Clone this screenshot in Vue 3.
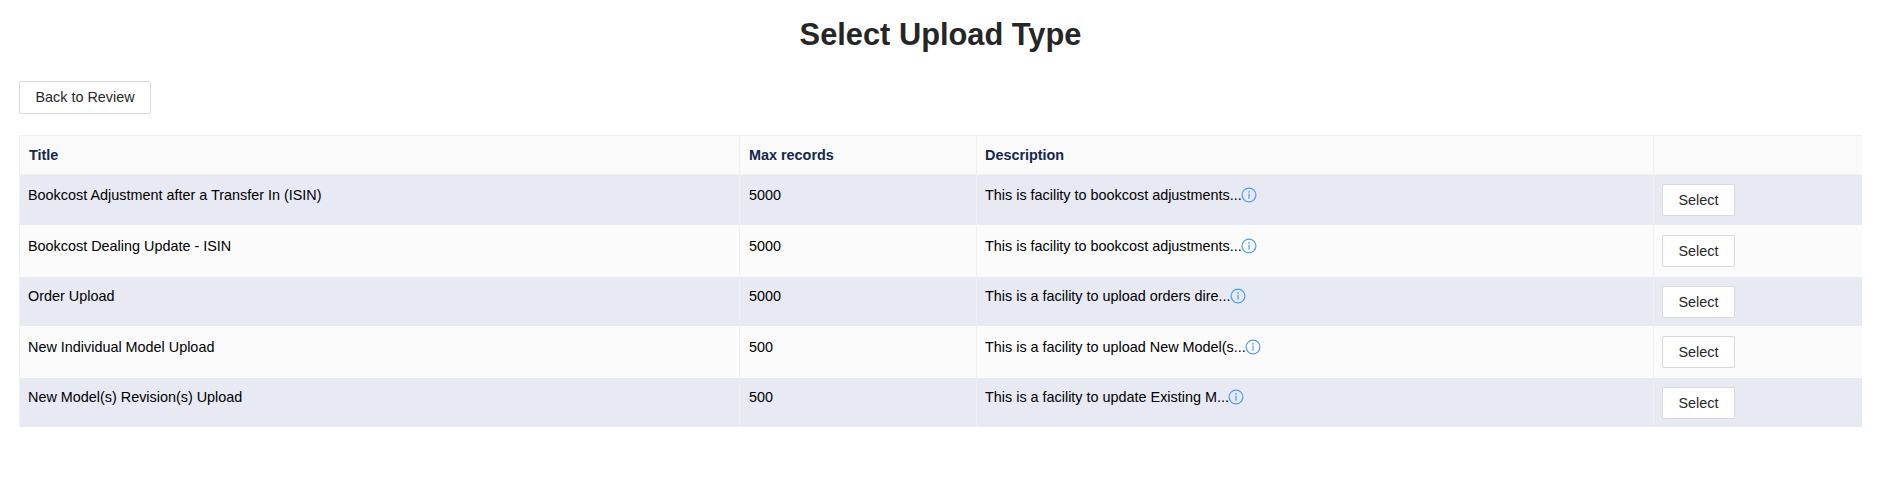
<script setup>
const rows = [
  { title: 'Bookcost Adjustment after a Transfer In (ISIN)', max: 5000, desc: 'This is facility to bookcost adjustments...' },
  { title: 'Bookcost Dealing Update - ISIN', max: 5000, desc: 'This is facility to bookcost adjustments...' },
  { title: 'Order Upload', max: 5000, desc: 'This is a facility to upload orders dire...' },
  { title: 'New Individual Model Upload', max: 500, desc: 'This is a facility to upload New Model(s...' },
  { title: 'New Model(s) Revision(s) Upload', max: 500, desc: 'This is a facility to update Existing M...' },
]
</script>

<template>
  <div class="page">
    <h1 class="heading">Select Upload Type</h1>
    <button class="btn back" type="button">Back to Review</button>
    <table class="grid">
      <colgroup>
        <col class="c1" /><col class="c2" /><col class="c3" /><col class="c4" />
      </colgroup>
      <thead>
        <tr>
          <th>Title</th>
          <th>Max records</th>
          <th>Description</th>
          <th></th>
        </tr>
      </thead>
      <tbody>
        <tr v-for="r in rows" :key="r.title">
          <td>{{ r.title }}</td>
          <td>{{ r.max }}</td>
          <td>
            <span class="desc">{{ r.desc }}<svg class="info" viewBox="0 0 16 16" width="16" height="16" aria-hidden="true">
              <circle cx="8" cy="8" r="6.9" fill="none" stroke="#4f9bf5" stroke-width="1.2" />
              <circle cx="8" cy="4.9" r="0.8" fill="#4f9bf5" />
              <rect x="7.4" y="6.7" width="1.2" height="5" fill="#4f9bf5" />
            </svg></span>
          </td>
          <td class="act"><button class="btn" type="button">Select</button></td>
        </tr>
      </tbody>
    </table>
  </div>
</template>

<style scoped>
.page {
  padding: 0 25px 0 19px;
  font-family: "Liberation Sans", Arial, sans-serif;
  font-size: 14.4px;
  color: #000;
}
.heading {
  margin: 0;
  padding-top: 17px;
  height: 64px;
  font-size: 30.8px;
  line-height: 36px;
  font-weight: 700;
  text-align: center;
  color: #262626;
}
.btn {
  display: inline-block;
  box-sizing: border-box;
  height: 32px;
  padding: 0;
  border: 1px solid #d9d9d9;
  border-radius: 2px;
  background: #fff;
  color: #262626;
  font-family: inherit;
  font-size: 14.4px;
  line-height: 30px;
  white-space: nowrap;
}
.back {
  display: block;
  width: 132px;
  height: 33px;
  line-height: 31px;
  margin-bottom: 21px;
}
.grid {
  width: 1843px;
  table-layout: fixed;
  border-collapse: separate;
  border-spacing: 0;
  border-top: 1px solid #f0f0f0;
  border-left: 1px solid #f0f0f0;
}
.c1 { width: 720px; }
.c2 { width: 237px; }
.c3 { width: 677px; }
th {
  height: 39px;
  box-sizing: border-box;
  padding: 0 8px;
  background: #fafafa;
  color: #14284b;
  font-weight: 700;
  font-size: 14.4px;
  text-align: left;
  border-right: 1px solid #f0f0f0;
  border-bottom: 1px solid #f0f0f0;
}
td {
  height: 50px;
  box-sizing: border-box;
  padding: 10px 8px 0;
  vertical-align: top;
  line-height: 20px;
  border-right: 1px solid #f0f0f0;
}
th:nth-child(-n+2) { padding-left: 9px; }
td:nth-child(2) { padding-left: 9px; }
th:last-child, td:last-child { border-right: 0; }
tbody tr:nth-child(odd) td { background: #e7e9f3; }
tbody tr:nth-child(even) td { background: #fbfbfb; height: 52px; padding-top: 11px; }
tbody tr:nth-child(n+3):nth-child(odd) td { height: 49px; padding-top: 9px; }
tbody tr td.act { padding-top: 9px; line-height: 0; }
tbody tr:nth-child(even) td.act { padding-top: 10px; }
td.act .btn { width: 73px; }
.desc { display: inline-flex; align-items: center; }
.info { display: block; margin: -1px 0 0 -1px; }
</style>
